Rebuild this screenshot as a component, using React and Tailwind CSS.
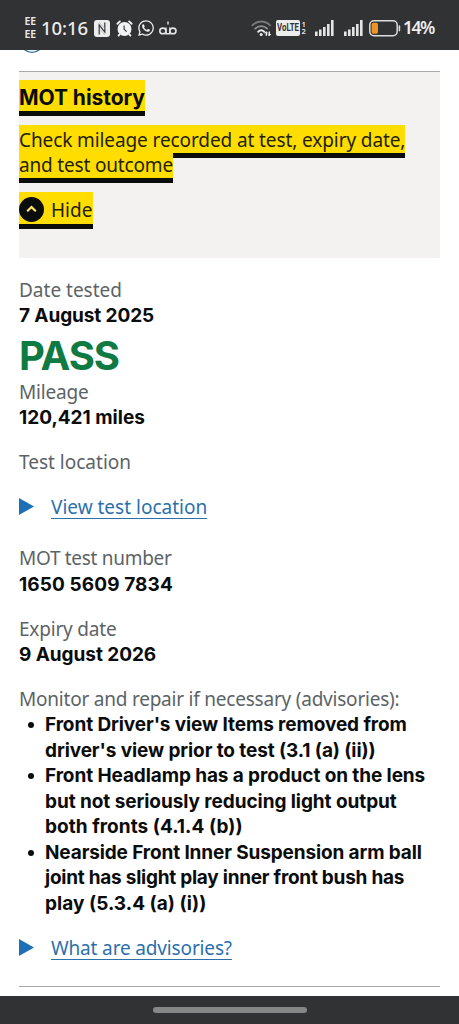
import { FaWhatsapp } from "react-icons/fa";

const ADVISORIES = [
  [
    { text: "Front Driver's view Items removed from", className: "tracking-[-0.1px]" },
    { text: "driver's view prior to test (3.1 (a) (ii))", className: "tracking-[-0.1px]" },
  ],
  [
    { text: "Front Headlamp has a product on the lens", className: "tracking-[-0.1px]" },
    { text: "but not seriously reducing light output", className: "tracking-[-0.07px]" },
    { text: "both fronts (4.1.4 (b))", className: "tracking-[0.04px]" },
  ],
  [
    { text: "Nearside Front Inner Suspension arm ball", className: "tracking-[-0.13px]" },
    { text: "joint has slight play inner front bush has", className: "tracking-[-0.25px]" },
    { text: "play (5.3.4 (a) (i))", className: "tracking-[0.04px]" },
  ],
];

function SignalIcon() {
  return (
    <svg width="19" height="16" viewBox="0 0 19 16" fill="#e4e4e4">
      <rect x="0" y="11.5" width="2.6" height="4.5" />
      <rect x="4" y="9.5" width="2.6" height="6.5" />
      <rect x="8" y="7" width="2.6" height="9" />
      <rect x="12" y="4" width="2.6" height="12" />
      <rect x="16" y="0" width="2.6" height="16" />
    </svg>
  );
}

function NfcIcon() {
  return (
    <svg width="16" height="17" viewBox="0 0 16 17">
      <rect width="16" height="17" rx="3" fill="#ececec" />
      <path d="M5.2 14.6V5L10.8 12V2.4" fill="none" stroke="#313234" strokeWidth="1.2" />
      <path d="M5.2 2.2 10.8 8.6M5.2 8.6 10.8 14.8" fill="none" stroke="#a4a5a6" strokeWidth="0.6" />
    </svg>
  );
}

function AlarmIcon() {
  return (
    <svg width="17" height="17" viewBox="0 0 17 17">
      <circle cx="8.5" cy="9" r="7" fill="#f2f2f2" />
      <path d="M1.4 3.8 3.9 1.4M15.6 3.8 13.1 1.4M3.6 14.4l-1 1.2M13.4 14.4l1 1.2" stroke="#f2f2f2" strokeWidth="1.9" strokeLinecap="round" />
      <path d="M8.1 5.4V9.3L10.6 11.6" fill="none" stroke="#414244" strokeWidth="1.2" />
    </svg>
  );
}

function VoicemailIcon() {
  return (
    <svg width="18" height="16" viewBox="0 0 18 16" fill="none" stroke="#e4e4e4" strokeWidth="1.6">
      <ellipse cx="3.9" cy="10.9" rx="3.1" ry="2.8" />
      <ellipse cx="13.9" cy="10.9" rx="3.1" ry="2.8" />
      <path d="M7 7.6V13.7H10.8V7.6M9 1.5V4.4" strokeWidth="1.4" />
    </svg>
  );
}

function WifiIcon() {
  return (
    <svg width="21" height="17" viewBox="0 0 21 17" fill="none" strokeLinecap="round">
      <path d="M1.3 5.4C6.2.2 14.2.2 19.1 5.4" stroke="#77787a" strokeWidth="1.8" />
      <path d="M4.2 8.6C7.6 5.2 12.8 5.2 16.2 8.6" stroke="#8f9092" strokeWidth="1.8" />
      <path d="M7.2 11.7C9 10 11.4 10 13.2 11.7" stroke="#ececec" strokeWidth="2" />
      <circle cx="10.2" cy="14.6" r="1.5" fill="#ececec" />
      <path d="M15.3 15.2V12.4M18.3 12V15" stroke="#ececec" strokeWidth="1.4" />
      <path d="M14 13.2l1.3-1.5 1.3 1.5M17 14.4l1.3 1.5 1.3-1.5" stroke="#ececec" strokeWidth="1" />
    </svg>
  );
}

function BatteryIcon() {
  return (
    <svg width="32" height="17" viewBox="0 0 32 17">
      <rect x="0.8" y="0.8" width="27.4" height="15" rx="4.2" fill="none" stroke="#dcdcdc" strokeWidth="1.5" />
      <rect x="2.6" y="2.8" width="6.4" height="11" rx="1.8" fill="#ee9424" />
      <path d="M30.4 6V10.6" stroke="#dcdcdc" strokeWidth="1.6" strokeLinecap="round" />
    </svg>
  );
}

function StatusBar() {
  return (
    <div className="flex h-[50px] shrink-0 items-center justify-between bg-[#313234] pt-[6px] pr-[25px] pl-[24px] font-['Noto_Sans',sans-serif] text-[#ececec]">
      <div className="flex items-center">
        <div className="w-[17px] pl-[0.5px] text-[10.5px] leading-[13.5px] font-semibold">
          <p>EE</p>
          <p>EE</p>
        </div>
        <span className="w-[53px] text-[18.5px] leading-none font-medium tracking-[-0.1px]">10:16</span>
        <NfcIcon />
        <span className="ml-[6px]"><AlarmIcon /></span>
        <FaWhatsapp size={18} className="ml-[4px]" />
        <span className="ml-[4px]"><VoicemailIcon /></span>
      </div>
      <div className="flex items-center">
        <WifiIcon />
        <div className="ml-[4px] flex h-[16px] w-[24px] items-center justify-center rounded-[2px] bg-[#ececec] text-[#313234]">
          <span className="scale-x-[0.78] font-['Roboto',sans-serif] text-[10px] leading-none font-bold">VoLTE</span>
        </div>
        <div className="ml-[1.5px] w-[13.5px] text-[7.5px] leading-[7.5px] font-semibold">
          <p>1</p>
          <p>2</p>
        </div>
        <SignalIcon />
        <span className="mr-[6px] ml-[10px]"><SignalIcon /></span>
        <BatteryIcon />
        <span className="ml-[2px] w-[31px] text-[17.5px] leading-none font-semibold tracking-[-1.5px]">14%</span>
      </div>
    </div>
  );
}

function Label({ children, className = "" }) {
  return <dt className={`h-[25.5px] leading-[25.5px] text-[#5c6367] ${className}`}>{children}</dt>;
}

function Value({ children, className = "" }) {
  return <dd className={`h-[25.5px] font-['Inter',sans-serif] leading-[25.5px] font-bold ${className}`}>{children}</dd>;
}

function DetailsLink({ children, className = "" }) {
  return (
    <div className={`flex h-[25.5px] items-center leading-[25.5px] text-[#2c70ab] ${className}`}>
      <svg width="32" height="17" viewBox="0 0 32 17" className="mb-[2px] shrink-0">
        <path d="M0 0 15 8.5 0 17Z" fill="#1d70b8" />
      </svg>
      <a className="underline decoration-1 underline-offset-[4px] [text-decoration-skip-ink:none]">{children}</a>
    </div>
  );
}

export default function App() {
  return (
    <div className="flex h-[1024px] w-[459px] flex-col overflow-hidden bg-white font-['Noto_Sans',sans-serif] text-[19px] whitespace-nowrap text-[#0b0c0c]">
      <StatusBar />

      {/* Bottom edge of the previous section's toggle, scrolled under the bar */}
      <div className="h-[21px] shrink-0 pl-[19px]">
        <svg width="26" height="4" viewBox="0 22 26 4">
          <circle cx="13" cy="12.8" r="11.6" fill="#eef5fb" stroke="#3d729c" strokeWidth="1.4" />
        </svg>
      </div>

      {/* Accordion header */}
      <div className="mx-[19px] h-[187px] w-[421px] shrink-0 border-t border-[#a6a9aa] bg-[#f3f2f1] pt-[12px]">
        <h2 className="h-[28px] font-['Inter',sans-serif] text-[21px] leading-[28px] font-bold tracking-[-0.05px]">
          <span className="bg-[#ffdd00] pt-[4px] pb-[1px] shadow-[0_-1px_#ffdd00,0_5px_#0b0c0c]">MOT history</span>
        </h2>
        <p className="mt-[15.5px] leading-[25.5px] text-[#231f08]">
          <span className="bg-[#ffdd00] tracking-[-0.1px] shadow-[0_-2px_#ffdd00,0_5px_#0b0c0c]">
            Check mileage recorded at test, expiry date,
          </span>
          <br />
          <span className="bg-[#ffdd00] tracking-[-0.17px] shadow-[0_5px_#0b0c0c]">and test outcome</span>
        </p>
        <div className="mt-[13.5px] flex h-[37px] w-[73.5px] items-center border-b-[5px] border-[#0b0c0c] bg-[#ffdd00]">
          <svg width="25" height="25" viewBox="0 0 25 25" className="mt-[2px] mr-[7px] shrink-0">
            <circle cx="12.5" cy="12.5" r="12.5" fill="#0b0c0c" />
            <path d="M8.2 14.3 12.5 10 16.8 14.3" fill="none" stroke="#ffe566" strokeWidth="2.2" />
          </svg>
          <span className="pt-[4.5px] text-[#231f08]">Hide</span>
        </div>
      </div>

      {/* Test result */}
      <dl className="mx-[19px] mt-[19.5px] h-[709.5px] shrink-0 border-b border-[#a6a9aa]">
        <Label>Date tested</Label>
        <Value className="tracking-[-0.1px]">7 August 2025</Value>
        <dd className="h-[51px] pt-[5px] font-['Inter',sans-serif] text-[40px] leading-[44px] font-bold tracking-[-1.1px] text-[#0f7a42]">PASS</dd>
        <Label className="tracking-[-0.18px]">Mileage</Label>
        <Value>120,421 miles</Value>
        <Label className="mt-[19.5px]">Test location</Label>
        <DetailsLink className="mt-[19.5px]">View test location</DetailsLink>
        <Label className="mt-[25.5px] tracking-[-0.3px]">MOT test number</Label>
        <Value className="tracking-[0.11px]">1650 5609 7834</Value>
        <Label className="mt-[19.5px] tracking-[-0.19px]">Expiry date</Label>
        <Value className="tracking-[-0.06px]">9 August 2026</Value>
        <Label className="mt-[19px] tracking-[-0.22px]">Monitor and repair if necessary (advisories):</Label>
        <dd>
          <ul className="font-['Inter',sans-serif] leading-[25.5px] font-bold">
            {ADVISORIES.map((lines) => (
              <li key={lines[0].text} className="flex">
                <span className="mt-[10px] mr-[11.5px] ml-[8.5px] size-[6px] shrink-0 rounded-full bg-[#0b0c0c]" />
                <div>
                  {lines.map((line) => (
                    <p key={line.text} className={line.className}>{line.text}</p>
                  ))}
                </div>
              </li>
            ))}
          </ul>
        </dd>
        <DetailsLink className="mt-[19.5px] tracking-[-0.15px]">What are advisories?</DetailsLink>
      </dl>

      {/* Gesture bar */}
      <div className="mt-auto flex h-[28px] shrink-0 justify-center bg-[#313234] pt-[11px]">
        <div className="h-[6px] w-[154px] rounded-full bg-[#878787]" />
      </div>
    </div>
  );
}
